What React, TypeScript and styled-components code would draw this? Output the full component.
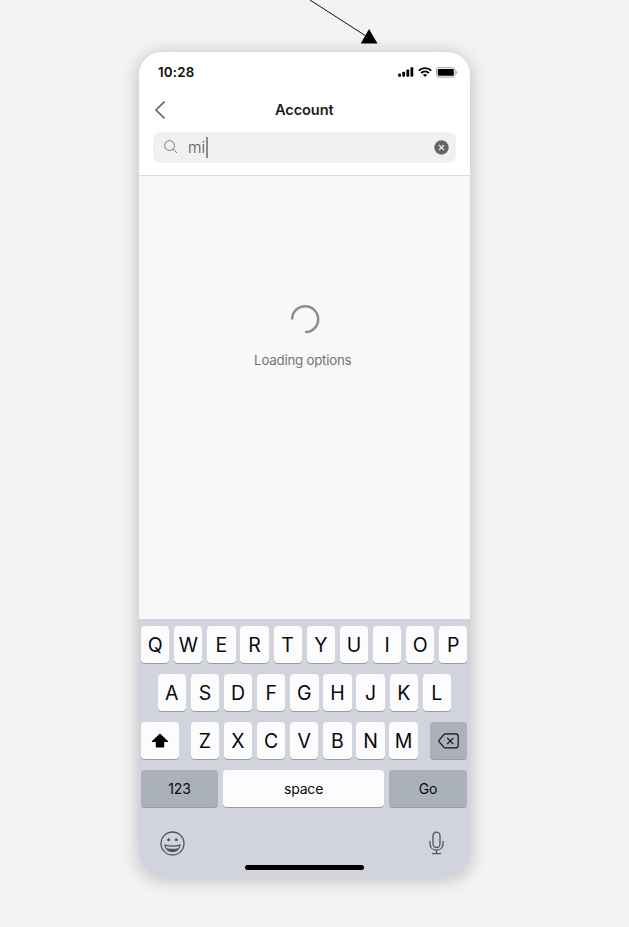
import React from 'react';
import styled, { createGlobalStyle } from 'styled-components';

const GlobalStyle = createGlobalStyle`
  *, *::before, *::after { box-sizing: border-box; }
  html, body { margin: 0; background: #f3f3f3; }
  body { font-family: Inter, Roboto, sans-serif; color: #1b1b1b; overflow: hidden; }
  svg { display: block; }
`;

const Canvas = styled.main`
  position: relative;
  width: 629px;
  height: 927px;
  padding: 52px 0 0 138.5px;
  background: #f3f3f3;
`;

const Connector = styled.svg`
  position: absolute;
  left: 300px;
  top: 0;
`;

const Phone = styled.section`
  display: flex;
  flex-direction: column;
  width: 331.5px;
  height: 825px;
  overflow: hidden;
  border-radius: 23px;
  background: #f8f8f8;
  box-shadow: 0 2px 18px rgba(0, 0, 0, 0.24);
`;

const Header = styled.header`
  height: 124px;
  background: #fff;
  border-bottom: 1px solid #dcdcdc;
`;

const StatusBar = styled.div`
  display: flex;
  align-items: center;
  justify-content: space-between;
  height: 40px;
  padding: 0 12.5px 0 19.5px;
`;

const Clock = styled.span`
  font-size: 13.3px;
  font-weight: 600;
  letter-spacing: 0.2px;
  color: #0c0c0c;
`;

const StatusIcons = styled.div`
  display: flex;
  align-items: center;
  gap: 4px;
`;

const TitleBar = styled.div`
  display: grid;
  grid-template-columns: 40px 1fr 40px;
  align-items: center;
  height: 36.6px;
`;

const BackButton = styled.button`
  padding: 0 0 0 15px;
  border: 0;
  background: none;
`;

const Title = styled.h1`
  margin: 0;
  font-size: 14.6px;
  font-weight: 600;
  letter-spacing: -0.12px;
  text-align: center;
`;

const SearchField = styled.div`
  display: flex;
  align-items: center;
  height: 31.5px;
  margin: 3px 14px 0;
  padding: 0 7px 0 11px;
  border-radius: 8px;
  background: #f0f0f0;
`;

const Query = styled.span`
  margin-left: 10.5px;
  font-size: 15.5px;
  font-weight: 300;
  letter-spacing: -0.1px;
  color: #555;
`;

const Caret = styled.i`
  width: 2px;
  height: 21px;
  margin: 0 auto 0 1px;
  background: #8b8b8b;
`;

const Content = styled.div`
  display: flex;
  flex: 1;
  flex-direction: column;
  align-items: center;
  padding-top: 128px;
`;

const LoadingText = styled.p`
  margin: 17px 3px 0 0;
  font-size: 13.3px;
  line-height: 18px;
  letter-spacing: -0.23px;
  color: #747474;
`;

const Keyboard = styled.div`
  display: flex;
  flex-direction: column;
  gap: 10.8px;
  height: 258px;
  padding: 7.45px 2.5px 0;
  background: #d1d4dc;
`;

const KeyRow = styled.div<{ $inset?: number }>`
  display: flex;
  gap: 4.8px;
  height: 37px;
  padding: 0 ${({ $inset = 0 }) => $inset}px;
`;

const LetterGroup = styled.div`
  display: flex;
  gap: 4.8px;
  margin: 0 auto;
`;

const Key = styled.button<{ $width?: number; $tone?: 'light' | 'dark'; $word?: boolean }>`
  display: flex;
  flex: none;
  align-items: center;
  justify-content: center;
  width: ${({ $width = 28.33 }) => $width}px;
  height: 37px;
  padding: ${({ $word }) => ($word ? '0' : '0.4px 0 0')};
  border: 0;
  border-radius: 4px;
  background: ${({ $tone }) => ($tone === 'dark' ? '#abb1bb' : '#fcfcfe')};
  box-shadow: 0 1px 0 #999ca2;
  color: #090909;
  font: ${({ $word }) => ($word ? '14px' : '19.5px')} Inter, sans-serif;
  letter-spacing: ${({ $word }) => ($word ? '-0.2px' : '0')};
`;

const BottomBar = styled.div`
  display: flex;
  align-items: center;
  justify-content: space-between;
  height: 27px;
  margin: 12.2px 23.5px 0 19px;
`;

const HomeIndicator = styled.div`
  width: 118.5px;
  height: 4.5px;
  margin: -2.4px auto 0;
  border-radius: 3px;
  background: #000;
`;

const SignalIcon = () => (
  <svg width="16" height="10" viewBox="0 0 16 10">
    <rect x="0.2" y="6.6" width="2.8" height="3.2" rx="0.8" />
    <rect x="4.3" y="4.7" width="2.8" height="5.1" rx="0.8" />
    <rect x="8.4" y="2.5" width="2.8" height="7.3" rx="0.8" />
    <rect x="12.5" y="0.2" width="2.8" height="9.6" rx="0.8" />
  </svg>
);

const WifiIcon = () => (
  <svg width="14" height="10" viewBox="0 0 14 10" fill="none" stroke="#000" strokeWidth="1.9">
    <path d="M0.8 3.7C4.2 0.3 9.8 0.3 13.2 3.7" />
    <path d="M3.1 6C5.3 3.9 8.7 3.9 10.9 6" />
    <path d="M4.9 7.8C6.1 6.8 7.9 6.8 9.1 7.8L7 9.9Z" fill="#000" stroke="none" />
  </svg>
);

const BatteryIcon = () => (
  <svg width="22" height="11" viewBox="0 0 22 11">
    <rect x="0.5" y="0.7" width="18.6" height="9.4" rx="2.4" fill="none" stroke="#a0a0a0" />
    <rect x="1.8" y="2" width="16" height="6.8" rx="1" />
    <path d="M20.3 3.7V7Q21.3 6.5 21.3 5.4T20.3 3.7Z" fill="#999" />
  </svg>
);

const BackIcon = () => (
  <svg width="12" height="18" viewBox="0 0 12 18" fill="none" stroke="#686868" strokeWidth="1.7">
    <path d="M10.5 0.7L2 9L10.5 17.3" />
  </svg>
);

const SearchIcon = () => (
  <svg width="14" height="14" viewBox="0 0 14 14" fill="none" stroke="#777" strokeWidth="1">
    <circle cx="5.6" cy="5.6" r="4.9" />
    <path d="M9.1 9.1L13 12.9" />
  </svg>
);

const ClearIcon = () => (
  <svg width="15" height="15" viewBox="0 0 15 15">
    <circle cx="7.5" cy="7.5" r="7.2" fill="#666" />
    <path d="M5 5L10 10M10 5L5 10" stroke="#f2f2f2" strokeWidth="1.1" />
  </svg>
);

const Spinner = () => (
  <svg width="32" height="30" viewBox="-2 0 32 30" fill="none" stroke="#8d8d8d" strokeWidth="2.5" strokeLinecap="round">
    <path d="M2.2 14.5A13 13 0 1 1 16.2 28.1" />
  </svg>
);

const ShiftIcon = () => (
  <svg width="18" height="15" viewBox="0 0 18 15">
    <path d="M9 0.4L17.2 8.3Q17.4 9 16.7 9H13.2V13.4Q13.2 14.6 12 14.6H6Q4.8 14.6 4.8 13.4V9H1.3Q0.6 9 0.8 8.3Z" />
  </svg>
);

const DeleteIcon = () => (
  <svg width="21" height="16" viewBox="0 0 21 16" fill="none" stroke="#111" strokeWidth="1.2">
    <path d="M7.3 0.9H17.7Q20.2 0.9 20.2 3.4V12.4Q20.2 14.9 17.7 14.9H7.3Q6.5 14.9 5.8 14.2L1.2 8.9Q0.5 8 1.2 7.1L5.8 1.6Q6.5 0.9 7.3 0.9Z" />
    <path d="M9.2 4.8L15.4 11.1M15.4 4.8L9.2 11.1" />
  </svg>
);

const EmojiIcon = () => (
  <svg width="25" height="25" viewBox="0 0 25 25" fill="none" stroke="#50545b" strokeWidth="1.3">
    <circle cx="12.5" cy="12.5" r="11.5" />
    <circle cx="8.7" cy="8.8" r="1.5" fill="#50545b" stroke="none" />
    <circle cx="16.3" cy="8.8" r="1.5" fill="#50545b" stroke="none" />
    <path d="M5.1 14.1Q12.5 16.1 19.9 14.1C19.6 18.3 16.3 20.6 12.5 20.6S5.4 18.3 5.1 14.1Z" />
    <path d="M6.2 17Q12.5 18.7 18.8 17Q16.7 20.6 12.5 20.6T6.2 17Z" fill="#50545b" stroke="none" />
  </svg>
);

const MicIcon = () => (
  <svg width="15" height="24" viewBox="0 0 15 24" fill="none" stroke="#50545b" strokeWidth="1.3" strokeLinecap="round">
    <rect x="4" y="1.2" width="7" height="15.3" rx="3.5" />
    <path d="M1 10.5V13C1 21.2 14 21.2 14 13V10.5M7.5 19.3V22.7M3.5 22.7H11.5" />
  </svg>
);

const renderKeys = (letters: string) =>
  letters.split('').map((letter) => <Key key={letter}>{letter}</Key>);

export default function App() {
  return (
    <>
      <GlobalStyle />
      <Canvas>
        <Connector width="90" height="50" viewBox="0 0 90 50">
          <path d="M10 0L69 38" stroke="#111" strokeWidth="1" />
          <path d="M69 29L77.5 43.5H60.8Z" />
        </Connector>
        <Phone>
          <Header>
            <StatusBar>
              <Clock>10:28</Clock>
              <StatusIcons>
                <SignalIcon />
                <WifiIcon />
                <BatteryIcon />
              </StatusIcons>
            </StatusBar>
            <TitleBar>
              <BackButton aria-label="Back"><BackIcon /></BackButton>
              <Title>Account</Title>
            </TitleBar>
            <SearchField>
              <SearchIcon />
              <Query>mi</Query>
              <Caret />
              <ClearIcon />
            </SearchField>
          </Header>
          <Content>
            <Spinner />
            <LoadingText>Loading options</LoadingText>
          </Content>
          <Keyboard>
            <KeyRow>{renderKeys('QWERTYUIOP')}</KeyRow>
            <KeyRow $inset={16.7}>{renderKeys('ASDFGHJKL')}</KeyRow>
            <KeyRow>
              <Key $width={37.5} aria-label="Shift"><ShiftIcon /></Key>
              <LetterGroup>{renderKeys('ZXCVBNM')}</LetterGroup>
              <Key $width={37.5} $tone="dark" aria-label="Delete"><DeleteIcon /></Key>
            </KeyRow>
            <KeyRow>
              <Key $width={77} $tone="dark" $word>123</Key>
              <Key $width={161.5} $word>space</Key>
              <Key $width={78} $tone="dark" $word>Go</Key>
            </KeyRow>
            <BottomBar>
              <EmojiIcon />
              <MicIcon />
            </BottomBar>
            <HomeIndicator />
          </Keyboard>
        </Phone>
      </Canvas>
    </>
  );
}
